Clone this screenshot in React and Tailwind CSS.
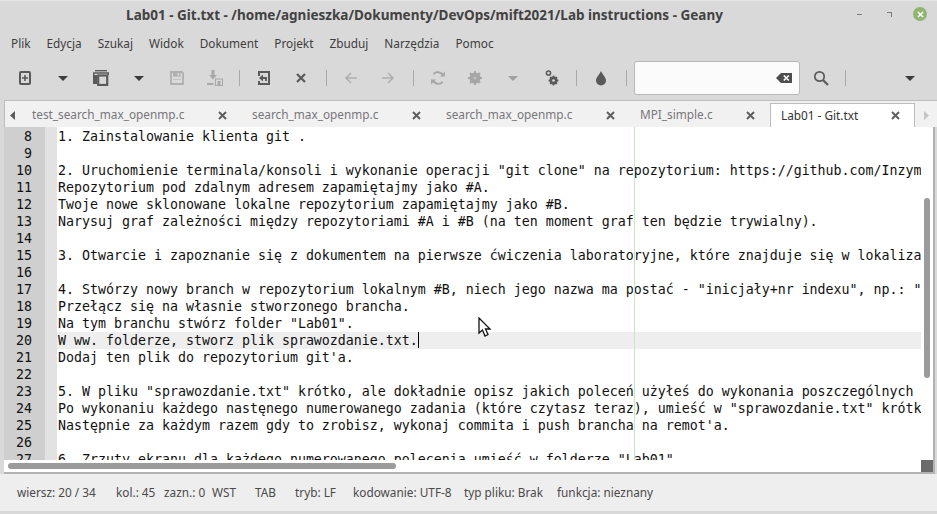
import { X } from "lucide-react";

const menus = ["Plik", "Edycja", "Szukaj", "Widok", "Dokument", "Projekt", "Zbuduj", "Narzędzia", "Pomoc"];

const tabs = [
  { name: "test_search_max_openmp.c", width: "w-[220px]" },
  { name: "search_max_openmp.c", width: "w-[194px]" },
  { name: "search_max_openmp.c", width: "w-[194px]" },
  { name: "MPI_simple.c", width: "w-[140px]" },
];

const lines = [
  [8, "1. Zainstalowanie klienta git ."],
  [9, ""],
  [10, '2. Uruchomienie terminala/konsoli i wykonanie operacji "git clone" na repozytorium: https://github.com/Inzym'],
  [11, "Repozytorium pod zdalnym adresem zapamiętajmy jako #A."],
  [12, "Twoje nowe sklonowane lokalne repozytorium zapamiętajmy jako #B."],
  [13, "Narysuj graf zależności między repozytoriami #A i #B (na ten moment graf ten będzie trywialny)."],
  [14, ""],
  [15, "3. Otwarcie i zapoznanie się z dokumentem na pierwsze ćwiczenia laboratoryjne, które znajduje się w lokaliza"],
  [16, ""],
  [17, '4. Stwórzy nowy branch w repozytorium lokalnym #B, niech jego nazwa ma postać - "inicjały+nr indexu", np.: "'],
  [18, "Przełącz się na własnie stworzonego brancha."],
  [19, 'Na tym branchu stwórz folder "Lab01".'],
  [20, "W ww. folderze, stworz plik sprawozdanie.txt."],
  [21, "Dodaj ten plik do repozytorium git'a."],
  [22, ""],
  [23, '5. W pliku "sprawozdanie.txt" krótko, ale dokładnie opisz jakich poleceń użyłeś do wykonania poszczególnych'],
  [24, 'Po wykonaniu każdego nastęnego numerowanego zadania (które czytasz teraz), umieść w "sprawozdanie.txt" krótk'],
  [25, "Następnie za każdym razem gdy to zrobisz, wykonaj commita i push brancha na remot'a."],
  [26, ""],
  [27, '6. Zrzuty ekranu dla każdego numerowanego polecenia umieść w folderze "Lab01".'],
];

const status = [
  ["wiersz: 20 / 34", "w-[99px]"],
  ["kol.: 45", "w-[48px]"],
  ["zazn.: 0", "w-[48px]"],
  ["WST", "w-[43px]"],
  ["TAB", "w-[40px]"],
  ["tryb: LF", "w-[58px]"],
  ["kodowanie: UTF-8", "w-[111px]"],
  ["typ pliku: Brak", "w-[93px]"],
  ["funkcja: nieznany", ""],
];

const Sep = () => <div className="w-px h-[16px] bg-[#a9a9a9]" />;

const Caret = ({ color = "#3d3d3d" }) => (
  <svg width="10" height="5" viewBox="0 0 10 5">
    <path d="M0 0h10L5 5z" fill={color} />
  </svg>
);

const Icon = ({ children, className = "" }) => (
  <svg width="16" height="16" viewBox="0 0 16 16" className={className}>
    {children}
  </svg>
);

const Arrow = ({ flip }) => (
  <Icon className={flip ? "-scale-x-100" : ""}>
    <path d="M14 8H3M8 3L3 8l5 5" fill="none" stroke="#b0b0b0" strokeWidth="1.6" />
  </Icon>
);

const TabClose = () => (
  <svg width="11" height="11" viewBox="0 0 11 11">
    <path d="M2 2l7 7M9 2l-7 7" stroke="#5f5f5f" strokeWidth="2" />
  </svg>
);

const Toolbar = () => (
  <div className="h-[42px] pb-[2px] flex items-center text-[#4d4d4d]">
    {/* new */}
    <div className="ml-[17px] w-4 h-4">
      <Icon>
        <rect x="3" y="2" width="10" height="12" rx="1" fill="none" stroke="#5a5a5a" strokeWidth="2" />
        <path d="M8 5v6M5 8h6" stroke="#5a5a5a" strokeWidth="1.6" />
      </Icon>
    </div>
    <div className="ml-[25px] w-[10px] flex">
      <Caret />
    </div>
    {/* open */}
    <div className="ml-[25px] w-4 h-4">
      <Icon>
        <path d="M2 .7h12" stroke="#5a5a5a" strokeWidth="1.4" />
        <path d="M.7 6V3h14.600v2" fill="none" stroke="#5a5a5a" strokeWidth="1.4" />
        <path d="M0 5h4v9H0z" fill="#5a5a5a" />
        <rect x="5.200" y="5.500" width="9" height="9.500" fill="none" stroke="#5a5a5a" strokeWidth="2.200" />
      </Icon>
    </div>
    <div className="ml-[25px] w-[10px] flex">
      <Caret />
    </div>
    {/* save */}
    <div className="ml-[25px] w-4 h-4">
      <Icon>
        <path d="M2 2h11l1 1v11H2z" fill="none" stroke="#b0b0b0" strokeWidth="1.800" />
        <path d="M4 2h7.500v4.500H4zM4 9.500h8V14H4z" fill="#b0b0b0" />
        <rect x="8.500" y="3" width="1.500" height="2.500" fill="#d9d9d9" />
        <rect x="4" y="10" width="8" height="3" fill="#d9d9d9" />
      </Icon>
    </div>
    {/* save all */}
    <div className="ml-[22px] w-4 h-4">
      <Icon>
        <path d="M4.500 0h3v5H10L6 9.500 2 5h2.500z" fill="#a8a8a8" />
        <path d="M0 13h6.500v2H0z" fill="#a8a8a8" />
        <rect x="8.500" y="9" width="7" height="6.500" fill="none" stroke="#a8a8a8" />
        <rect x="10.500" y="11" width="3" height="4" fill="#a8a8a8" />
      </Icon>
    </div>
    <div className="ml-[16px]">
      <Sep />
    </div>
    {/* reload */}
    <div className="ml-[16px] w-4 h-4">
      <Icon>
        <path d="M3 6V2h10v12H3v-3" fill="none" stroke="#5a5a5a" strokeWidth="2" />
        <path d="M3 8l4-3.500v7z" fill="#5a5a5a" />
        <path d="M6 8h4v3" fill="none" stroke="#5a5a5a" strokeWidth="1.800" />
      </Icon>
    </div>
    {/* close */}
    <div className="ml-[21px] w-4 h-4">
      <Icon>
        <path d="M4 4l8 8M12 4l-8 8" stroke="#5a5a5a" strokeWidth="2.200" />
      </Icon>
    </div>
    <div className="ml-[17px]">
      <Sep />
    </div>
    <div className="ml-[16px] w-4 h-4">
      <Arrow />
    </div>
    <div className="ml-[21px] w-4 h-4">
      <Arrow flip />
    </div>
    <div className="ml-[17px]">
      <Sep />
    </div>
    {/* compile */}
    <div className="ml-[16px] w-4 h-4">
      <Icon>
        <path d="M13 5.500A5.800 5.800 0 0 0 3.400 4.200M3 10.500a5.800 5.800 0 0 0 9.600 1.300" fill="none" stroke="#a6a6a6" strokeWidth="1.800" />
        <path d="M10 6.500h5V1.500zM6 9.500H1v5z" fill="#a6a6a6" />
      </Icon>
    </div>
    {/* build */}
    <div className="ml-[21px] w-4 h-4">
      <Icon>
        <circle cx="8" cy="8" r="5.500" fill="#a6a6a6" />
        <path d="M8 1v14M1 8h14M3 3l10 10M13 3L3 13" stroke="#a6a6a6" strokeWidth="2" />
        <circle cx="8" cy="8" r="1.600" fill="#bdbdbd" />
      </Icon>
    </div>
    <div className="ml-[25px] w-[10px] flex">
      <Caret color="#a0a0a0" />
    </div>
    {/* run */}
    <div className="ml-[25px] w-4 h-4">
      <Icon>
        <circle cx="5.500" cy="3" r="2.100" fill="none" stroke="#5a5a5a" strokeWidth="1.500" />
        <circle cx="10.500" cy="10.500" r="3" fill="none" stroke="#5a5a5a" strokeWidth="2.400" />
        <path d="M10.500 5.500v10M5.500 10.500h10M7 7l7 7M14 7l-7 7" stroke="#5a5a5a" strokeWidth="1.300" />
        <circle cx="10.500" cy="10.500" r="1.300" fill="#d9d9d9" />
      </Icon>
    </div>
    <div className="ml-[17px]">
      <Sep />
    </div>
    {/* color */}
    <div className="ml-[16px] w-4 h-4">
      <Icon>
        <path d="M8 1C6.500 4.500 3 7.500 3 10.500a5 5 0 0 0 10 0C13 7.500 9.500 4.500 8 1z" fill="#5a5a5a" />
      </Icon>
    </div>
    <div className="ml-[17px]">
      <Sep />
    </div>
    {/* search */}
    <div className="ml-[7px] w-[166px] h-[34px] bg-[#fbfbfb] border border-[#b8b8b8] rounded-[3px] flex items-center justify-end pr-[7px]">
      <svg width="16" height="10" viewBox="0 0 16 10">
        <path d="M5 0h11v10H5L0 5z" fill="#4d4d4d" />
        <path d="M7.800 2.500l5 5M12.800 2.500l-5 5" stroke="#fbfbfb" strokeWidth="1.700" />
      </svg>
    </div>
    <div className="ml-[13px] w-4 h-4">
      <Icon>
        <circle cx="6.500" cy="6.500" r="4.700" fill="none" stroke="#5a5a5a" strokeWidth="1.700" />
        <path d="M10 10l5 5" stroke="#5a5a5a" strokeWidth="2.200" />
      </Icon>
    </div>
    <div className="ml-[16px]">
      <Sep />
    </div>
    <div className="ml-[59px] w-[10px] flex">
      <Caret />
    </div>
  </div>
);

const Tabs = () => (
  <div className="h-[27px] ml-[4px] flex items-stretch bg-[#f1f1f1] border-t border-l border-[#bdbdbd] text-[11.8px] text-[#77767b]">
    <div className="w-[17px] flex items-center pl-[5px] pt-[2px]">
      <svg width="5" height="9" viewBox="0 0 5 9">
        <path d="M5 0v9L0 4.500z" fill="#5c5c5c" />
      </svg>
    </div>
    {tabs.map((tab, i) => (
      <div key={i} className={`${tab.width} pl-[10px] pr-[14px] pt-[2px] flex items-center justify-between`}>
        <span>{tab.name}</span>
        <TabClose />
      </div>
    ))}
    <div className="w-[145px] mt-[2px] bg-white border border-b-0 border-[#bdbdbd] flex items-center justify-between pl-[10px] pr-[13px] text-[#333333] relative z-10">
      <span>Lab01 - Git.txt</span>
      <TabClose />
    </div>
    <div className="flex-1 flex items-center pl-[9px] pt-[2px]">
      <svg width="5" height="9" viewBox="0 0 5 9">
        <path d="M0 0v9L5 4.500z" fill="#c4c4c4" />
      </svg>
    </div>
  </div>
);

const Editor = () => (
  <div className="relative h-[347px] ml-[4px] mr-[2px] overflow-hidden bg-white border-b-2 border-r-2 border-[#b2b2b2] font-['DejaVu_Sans_Mono',monospace] text-[13.29px] text-[#111111]">
    {/* long line marker */}
    <div className="absolute left-[630px] top-0 bottom-0 w-px bg-[#c5e8c0] z-10" />
    {/* 1px gap above the first line, the margins run through it */}
    <div className="h-px flex">
      <div className="w-[41px] bg-[#cfcfcf]" />
      <div className="w-[12px] bg-[#e2e2e2]" />
    </div>
    {lines.map(([n, text]) => (
      <div key={n} className={`h-[17px] leading-[17px] flex mr-[12px] ${n === 20 ? "bg-[#eeeeee]" : ""}`}>
        <div className="w-[41px] shrink-0 bg-[#cfcfcf] text-right pr-[13px]">{n}</div>
        <div className="w-[12px] shrink-0 bg-[#e2e2e2]" />
        <div className="pl-px whitespace-pre overflow-hidden flex-1">
          {text}
          {n === 20 && <span className="inline-block w-px h-[16px] bg-black align-top" />}
        </div>
      </div>
    ))}
    {/* scrollbars sit over the text */}
    <div className="absolute left-0 right-0 bottom-0 h-[12px] bg-white z-20">
      <div className="absolute left-[4px] top-[3px] w-[388px] h-[6px] rounded-full bg-[#9b9b9b]" />
    </div>
    <div className="absolute right-0 top-0 bottom-0 w-[12px] bg-white z-20">
      <div className="absolute left-[3px] top-[71px] w-[6px] h-[180px] rounded-full bg-[#9b9b9b]" />
      <div className="absolute left-0 bottom-0 w-[12px] h-[12px] bg-[#6b6b6b]" />
    </div>
    {/* mouse pointer */}
    <svg width="14" height="21" viewBox="0 0 14 21" className="absolute left-[474px] top-[190px] z-30">
      <path d="M1 1v15l3.500-3 2.500 6 3-1.500-2.500-5.500H12z" fill="#ffffff" stroke="#111111" strokeWidth="1.300" />
    </svg>
  </div>
);

export default function App() {
  return (
    <div className="w-[937px] h-[514px] overflow-hidden bg-[#d9d9d9] font-['Noto_Sans',sans-serif] text-[#3d3d3d] flex flex-col">
      {/* title bar */}
      <div className="h-[30px] shrink-0 relative flex items-center justify-center pr-[88px] border-t border-[#e6e6e6] text-[13.5px] font-bold text-[#424242]">
        <span>Lab01 - Git.txt - /home/agnieszka/Dokumenty/DevOps/mift2021/Lab instructions - Geany</span>
        <div className="absolute right-[10px] top-[6px] flex items-center">
          <div className="w-[5px] h-px bg-[#7a7a7a]" />
          <div className="ml-[25px] w-[5px] h-[5px] border-t border-r border-[#7a7a7a]" />
          <div className="ml-[21px] w-[14px] h-[14px] rounded-full bg-[#8fb56f] flex items-center justify-center">
            <X size={9} strokeWidth={4} color="#ffffff" />
          </div>
        </div>
      </div>
      {/* menu bar */}
      <div className="h-[28px] shrink-0 flex items-center pl-[11px] gap-[16px] text-[11.8px]">
        {menus.map((m) => (
          <span key={m}>{m}</span>
        ))}
      </div>
      <Toolbar />
      <Tabs />
      <Editor />
      {/* status bar */}
      <div className="h-[37px] shrink-0 bg-[#eeeeee] flex items-center pl-[17px] text-[11.8px] text-[#4a4a4a]">
        {status.map(([s, w]) => (
          <span key={s} className={`${w} shrink-0 whitespace-nowrap`}>
            {s}
          </span>
        ))}
      </div>
      <div className="flex-1 bg-[#d9d9d9]" />
    </div>
  );
}
